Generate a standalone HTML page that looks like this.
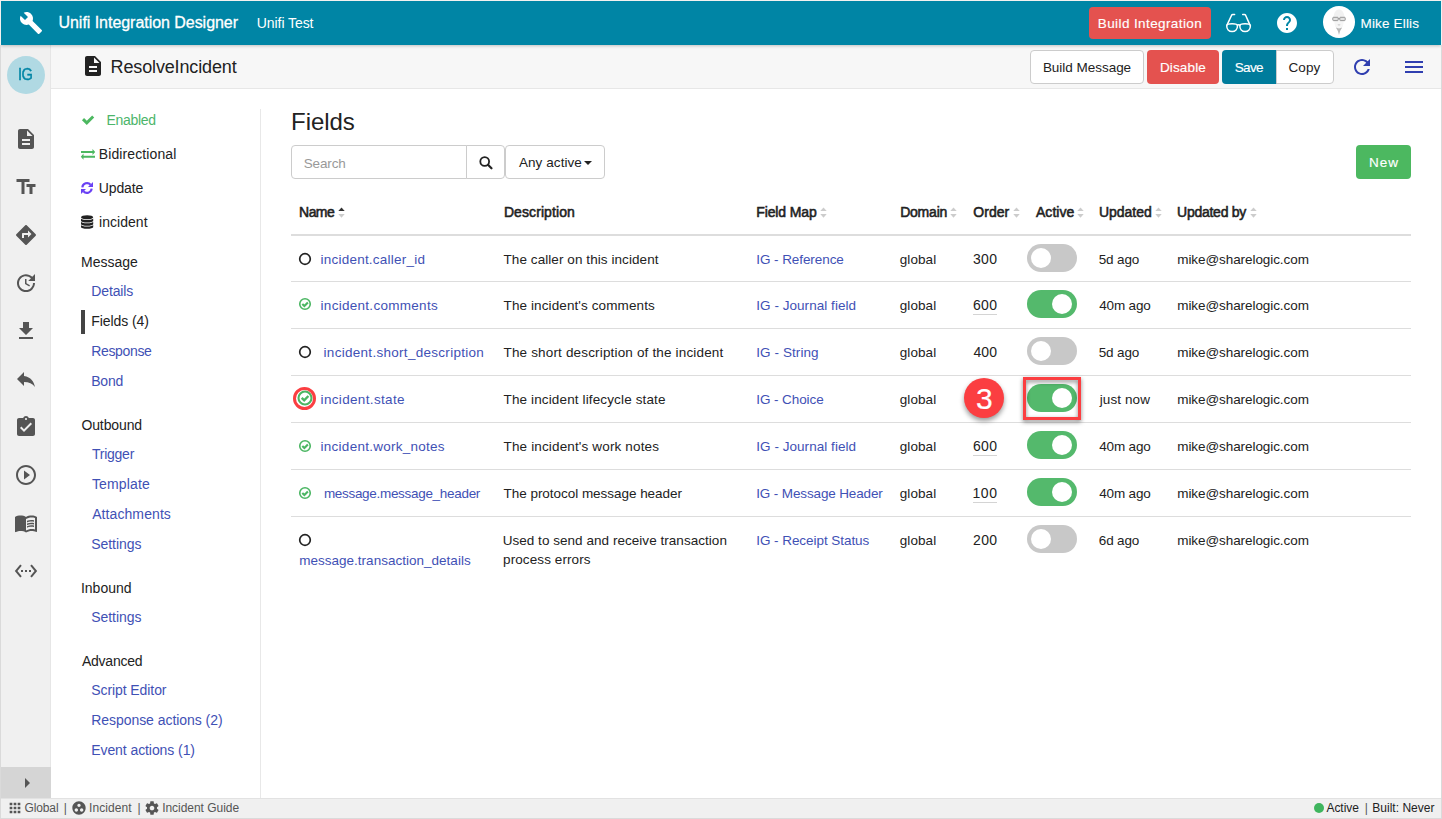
<!DOCTYPE html>
<html lang="en"><head><meta charset="utf-8"><title>Unifi Integration Designer</title>
<style>
html,body{margin:0;padding:0}
body{width:1442px;height:819px;overflow:hidden;background:#fff;position:relative;font-family:'Liberation Sans',sans-serif}
.b,.i,.t{position:absolute;box-sizing:border-box}
.t{position:absolute;white-space:nowrap;line-height:20px;font-family:'Liberation Sans',sans-serif}
header,aside,nav,main,footer,section{position:absolute;left:0;top:0;width:0;height:0}
.btn{border-radius:4px}
</style></head>
<body>
<aside><div class="b" style="left:1px;top:45px;width:50px;height:753px;background:#f0f0f0;border-right:1px solid #e6e6e6"></div><div class="b" style="left:7px;top:56px;width:38px;height:38px;background:#b0d9e3;border-radius:50%"></div><span id="ig" class="t" style="left:18.23px;top:65px;font-size:17px;font-weight:400;color:#0085a5;letter-spacing:-0.523px;-webkit-text-stroke:.45px #0085a5;transform:scaleX(.86);transform-origin:0 50%">IG</span><svg class="i" style="left:14px;top:127px" width="24" height="24" viewBox="0 0 24 24" fill="#555" ><path d="M14 2H6c-1.1 0-1.99.9-1.99 2L4 20c0 1.1.89 2 1.99 2H18c1.1 0 2-.9 2-2V8l-6-6zm2 16H8v-2h8v2zm0-4H8v-2h8v2zm-3-5V3.5L18.5 9H13z"/></svg><svg class="i" style="left:14px;top:175px" width="24" height="24" viewBox="0 0 24 24" fill="#555" ><path d="M2.5 4v3h5v12h3V7h5V4h-13zm19 5h-9v3h3v7h3v-7h3V9z"/></svg><svg class="i" style="left:14px;top:223px" width="24" height="24" viewBox="0 0 24 24" fill="#555" ><path d="M21.71 11.29l-9-9c-.39-.39-1.02-.39-1.41 0l-9 9c-.39.39-.39 1.02 0 1.41l9 9c.39.39 1.02.39 1.41 0l9-9c.39-.38.39-1.01 0-1.41zM14 14.5V12h-4v3H8v-4c0-.55.45-1 1-1h5V7.5l3.5 3.5-3.5 3.5z"/></svg><svg class="i" style="left:14px;top:271px" width="24" height="24" viewBox="0 0 24 24" fill="#555" ><path d="M21 10.12h-6.78l2.74-2.82c-2.73-2.7-7.15-2.8-9.88-.1-2.73 2.71-2.73 7.08 0 9.79 2.73 2.71 7.15 2.71 9.88 0C18.32 15.65 19 14.08 19 12.1h2c0 1.98-.88 4.55-2.64 6.29-3.51 3.48-9.21 3.48-12.72 0-3.5-3.47-3.53-9.11-.02-12.58 3.51-3.47 9.14-3.47 12.65 0L21 3v7.12zM12.5 8v4.25l3.5 2.08-.72 1.21L11 13V8h1.5z"/></svg><svg class="i" style="left:14px;top:319px" width="24" height="24" viewBox="0 0 24 24" fill="#555" ><path d="M19 9h-4V3H9v6H5l7 7 7-7zM5 18v2h14v-2H5z"/></svg><svg class="i" style="left:14px;top:367px" width="24" height="24" viewBox="0 0 24 24" fill="#555" ><path d="M10 9V5l-7 7 7 7v-4.1c5 0 8.5 1.6 11 5.1-1-5-4-10-11-11z"/></svg><svg class="i" style="left:14px;top:415px" width="24" height="24" viewBox="0 0 24 24" fill="#555" ><path d="M19 3h-4.18C14.4 1.84 13.3 1 12 1c-1.3 0-2.4.84-2.82 2H5c-1.1 0-2 .9-2 2v14c0 1.1.9 2 2 2h14c1.1 0 2-.9 2-2V5c0-1.1-.9-2-2-2zm-7 0c.55 0 1 .45 1 1s-.45 1-1 1-1-.45-1-1 .45-1 1-1zm-2 14l-4-4 1.41-1.41L10 14.17l6.59-6.59L18 9l-8 8z"/></svg><svg class="i" style="left:14px;top:463px" width="24" height="24" viewBox="0 0 24 24" fill="#555" ><path d="M10 16.5l6-4.5-6-4.5v9zM12 2C6.48 2 2 6.48 2 12s4.48 10 10 10 10-4.48 10-10S17.52 2 12 2zm0 18c-4.41 0-8-3.59-8-8s3.59-8 8-8 8 3.59 8 8-3.59 8-8 8z"/></svg><svg class="i" style="left:14px;top:511px" width="24" height="24" viewBox="0 0 24 24" fill="#555" ><path d="M21 5c-1.11-.35-2.33-.5-3.5-.5-1.950 0-4.050.4-5.5 1.500-1.450-1.100-3.550-1.500-5.500-1.500S2.450 4.900 1 6v14.650c0 .250.250.500.500.500.100 0 .150-.050.250-.050C3.100 20.450 5.050 20 6.500 20c1.950 0 4.050.400 5.500 1.500 1.350-.850 3.800-1.500 5.500-1.500 1.650 0 3.350.300 4.750 1.050.100.050.150.050.250.050.250 0 .500-.250.500-.500V6c-.600-.450-1.250-.750-2-1zm0 13.500c-1.100-.350-2.300-.500-3.500-.500-1.700 0-4.150.650-5.500 1.500V8c1.350-.850 3.800-1.500 5.500-1.500 1.200 0 2.400.150 3.500.500v11.500z M17.500 10.500c.880 0 1.730.090 2.500.260V9.240c-.790-.150-1.640-.240-2.500-.240-1.700 0-3.240.290-4.500.830v1.660c1.130-.640 2.700-.990 4.500-.990z M13 12.490v1.660c1.130-.640 2.700-.990 4.500-.990.880 0 1.730.090 2.500.260V11.900c-.790-.150-1.640-.240-2.500-.240-1.700 0-3.240.300-4.500.830z M17.500 14.330c-1.700 0-3.240.290-4.500.830v1.660c1.130-.640 2.700-.990 4.500-.990.880 0 1.730.090 2.500.260v-1.520c-.790-.160-1.640-.240-2.500-.240z"/></svg><svg class="i" style="left:14px;top:559px" width="24" height="24" viewBox="0 0 24 24" fill="#555" ><path d="M7.77 6.76L6.23 5.48.82 12l5.41 6.52 1.54-1.28L3.42 12l4.35-5.240zM7 13h2v-2H7v2zm10-2h-2v2h2v-2zm-6 2h2v-2h-2v2zm6.770-7.520l-1.540 1.280L20.580 12l-4.350 5.240 1.540 1.280L23.180 12l-5.410-6.520z"/></svg><div class="b" style="left:1px;top:767px;width:50px;height:31px;background:#d5d5d5"></div><svg class="i" style="left:15px;top:770.7px" width="24" height="24" viewBox="0 0 24 24" fill="#555" ><path d="M10 17l5-5-5-5v10z"/></svg></aside>
<section><div class="b" style="left:51px;top:45px;width:1390px;height:44px;background:#f7f7f7;border-bottom:1px solid #e7e7e7"></div><svg class="i" style="left:81px;top:54px" width="24" height="24" viewBox="0 0 24 24" fill="#222" ><path d="M14 2H6c-1.1 0-1.99.9-1.99 2L4 20c0 1.1.89 2 1.99 2H18c1.1 0 2-.9 2-2V8l-6-6zm2 16H8v-2h8v2zm0-4H8v-2h8v2zm-3-5V3.5L18.5 9H13z"/></svg><span id="s1" class="t" style="left:110.55px;top:57px;font-size:18px;font-weight:400;color:#222;letter-spacing:-0.137px;">ResolveIncident</span><div class="b btn" style="left:1030px;top:50px;width:114px;height:34px;background:#fff;border:1px solid #ccc"></div><div class="b btn" style="left:1147px;top:50px;width:72px;height:34px;background:#e4524f"></div><div class="b" style="left:1222px;top:50px;width:55px;height:34px;background:#007c9c;border-radius:4px 0 0 4px"></div><div class="b" style="left:1276px;top:50px;width:58px;height:34px;background:#fff;border:1px solid #ccc;border-radius:0 4px 4px 0"></div><span id="s2" class="t" style="left:1042.90px;top:58px;font-size:13.5px;font-weight:400;color:#222;letter-spacing:-0.027px;">Build Message</span><span id="s3" class="t" style="left:1159.94px;top:58px;font-size:13.5px;font-weight:400;color:#fff;letter-spacing:0.143px;-webkit-text-stroke:.15px #fff">Disable</span><span id="s4" class="t" style="left:1234.70px;top:58px;font-size:13.5px;font-weight:400;color:#fff;letter-spacing:-0.652px;-webkit-text-stroke:.15px #fff">Save</span><span id="s5" class="t" style="left:1288.39px;top:58px;font-size:13.5px;font-weight:400;color:#222;letter-spacing:0.151px;">Copy</span><svg class="i" style="left:1349.6px;top:55px" width="24" height="24" viewBox="0 0 24 24" fill="#303fb0" ><path d="M17.65 6.35C16.2 4.9 14.21 4 12 4c-4.42 0-7.99 3.58-7.99 8s3.57 8 7.99 8c3.73 0 6.84-2.55 7.73-6h-2.08c-.82 2.33-3.04 4-5.65 4-3.31 0-6-2.69-6-6s2.69-6 6-6c1.66 0 3.14.69 4.22 1.78L13 11h7V4l-2.35 2.35z"/></svg><svg class="i" style="left:1402px;top:55px" width="24" height="24" viewBox="0 0 24 24" fill="#303fb0" ><path d="M3 18h18v-2H3v2zm0-5h18v-2H3v2zm0-7v2h18V6H3z"/></svg></section>
<nav><div class="b" style="left:260px;top:109px;width:1px;height:689px;background:#e8e8e8"></div><svg class="i" style="left:80px;top:112px" width="16" height="14" viewBox="0 0 16 14"><path d="M3 7.100L6.800 10.900 13.200 4.500" fill="none" stroke="#4cb860" stroke-width="2.900"/></svg><svg class="i" style="left:80px;top:147px" width="16" height="14" viewBox="0 0 16 14" fill="#4cb860"><path d="M1 4h11.500V1.900L15.200 5l-2.700 3.100V6H1z"/><path d="M15 8.700H3.500V6.600L.8 9.700l2.700 3.100v-2.100H15z"/></svg><svg class="i" style="left:80px;top:181px" width="14" height="14" viewBox="0 0 14 14"><g fill="none" stroke="#6a42f4" stroke-width="2.100"><path d="M2.300 6.300A4.800 4.800 0 0 1 10.600 3.700"/><path d="M11.700 7.700A4.800 4.800 0 0 1 3.400 10.300"/></g><path d="M13 1v5H8z" fill="#6a42f4"/><path d="M1 13V8h5z" fill="#6a42f4"/></svg><svg class="i" style="left:80px;top:214px" width="14" height="16" viewBox="0 0 14 16" fill="#222"><ellipse cx="7.100" cy="3.200" rx="6.100" ry="2.050"/><path d="M1 4.45C1 5.35 3.7 5.95 7.1 5.95C10.5 5.95 13.2 5.35 13.2 4.45V6.95C13.2 7.85 10.5 8.45 7.1 8.45C3.7 8.45 1 7.85 1 6.95z"/><path d="M1 7.75C1 8.65 3.7 9.25 7.1 9.25C10.5 9.25 13.2 8.65 13.2 7.75V10.25C13.2 11.15 10.5 11.75 7.1 11.75C3.7 11.75 1 11.15 1 10.25z"/><path d="M1 11.05C1 11.95 3.7 12.55 7.1 12.55C10.5 12.55 13.2 11.95 13.2 11.05V13.25C13.2 14.15 10.5 14.75 7.1 14.75C3.7 14.75 1 14.15 1 13.25z"/></svg><div class="b" style="left:81px;top:310px;width:4px;height:24px;background:#444"></div><span id="n1" class="t" style="left:106.52px;top:110px;font-size:14px;font-weight:400;color:#4cb56a;letter-spacing:-0.314px;">Enabled</span><span id="n2" class="t" style="left:98.81px;top:144px;font-size:14px;font-weight:400;color:#222;letter-spacing:0.102px;">Bidirectional</span><span id="n3" class="t" style="left:98.86px;top:178px;font-size:14px;font-weight:400;color:#222;letter-spacing:-0.150px;">Update</span><span id="n4" class="t" style="left:99.07px;top:212px;font-size:14px;font-weight:400;color:#222;letter-spacing:0.032px;">incident</span><span id="n5" class="t" style="left:81.02px;top:252px;font-size:14px;font-weight:400;color:#222;letter-spacing:-0.008px;">Message</span><span id="n6" class="t" style="left:91.21px;top:281px;font-size:14px;font-weight:400;color:#3f51b5;letter-spacing:-0.107px;">Details</span><span id="n7" class="t" style="left:91.21px;top:311px;font-size:14px;font-weight:400;color:#222;letter-spacing:-0.066px;">Fields (4)</span><span id="n8" class="t" style="left:91.21px;top:341px;font-size:14px;font-weight:400;color:#3f51b5;letter-spacing:-0.342px;">Response</span><span id="n9" class="t" style="left:91.21px;top:371px;font-size:14px;font-weight:400;color:#3f51b5;letter-spacing:-0.195px;">Bond</span><span id="n10" class="t" style="left:81.41px;top:415px;font-size:14px;font-weight:400;color:#222;letter-spacing:-0.111px;">Outbound</span><span id="n11" class="t" style="left:91.96px;top:444px;font-size:14px;font-weight:400;color:#3f51b5;letter-spacing:-0.242px;">Trigger</span><span id="n12" class="t" style="left:91.96px;top:474px;font-size:14px;font-weight:400;color:#3f51b5;letter-spacing:0.138px;">Template</span><span id="n13" class="t" style="left:92.14px;top:504px;font-size:14px;font-weight:400;color:#3f51b5;letter-spacing:0.093px;">Attachments</span><span id="n14" class="t" style="left:91.20px;top:534px;font-size:14px;font-weight:400;color:#3f51b5;letter-spacing:-0.031px;">Settings</span><span id="n15" class="t" style="left:80.90px;top:578px;font-size:14px;font-weight:400;color:#222;letter-spacing:0.017px;">Inbound</span><span id="n16" class="t" style="left:91.20px;top:607px;font-size:14px;font-weight:400;color:#3f51b5;letter-spacing:-0.031px;">Settings</span><span id="n17" class="t" style="left:81.93px;top:651px;font-size:14px;font-weight:400;color:#222;letter-spacing:-0.237px;">Advanced</span><span id="n18" class="t" style="left:91.20px;top:680px;font-size:14px;font-weight:400;color:#3f51b5;letter-spacing:-0.075px;">Script Editor</span><span id="n19" class="t" style="left:91.21px;top:710px;font-size:14px;font-weight:400;color:#3f51b5;letter-spacing:-0.049px;">Response actions (2)</span><span id="n20" class="t" style="left:91.21px;top:740px;font-size:14px;font-weight:400;color:#3f51b5;letter-spacing:-0.078px;">Event actions (1)</span></nav>
<main><span id="m1" class="t" style="left:291.03px;top:112px;font-size:24px;font-weight:400;color:#222;letter-spacing:-0.034px;">Fields</span><div class="b" style="left:291px;top:145px;width:176px;height:34px;background:#fff;border:1px solid #ccc;border-radius:4px 0 0 4px"></div><div class="b" style="left:466px;top:145px;width:39px;height:34px;background:#fff;border:1px solid #ccc;border-radius:0 4px 4px 0"></div><svg class="i" style="left:477.500px;top:155px" width="16" height="16" viewBox="0 0 16 16" fill="none" stroke="#222"><circle cx="6.700" cy="6.500" r="4.400" stroke-width="1.800"/><path d="M10 9.800l3.500 3.500" stroke-width="2.200" stroke-linecap="round"/></svg><div class="b btn" style="left:505px;top:145px;width:100px;height:34px;background:#fff;border:1px solid #ccc"></div><svg class="i" style="left:583.800px;top:161px" width="8" height="4" viewBox="0 0 8 4"><path d="M0 0h8L4 4z" fill="#222"/></svg><div class="b btn" style="left:1356px;top:145px;width:55px;height:34px;background:#4cb860"></div><span id="m2" class="t" style="left:303.63px;top:154px;font-size:13.5px;font-weight:400;color:#999;letter-spacing:-0.121px;">Search</span><span id="m3" class="t" style="left:518.91px;top:153px;font-size:13.5px;font-weight:400;color:#222;letter-spacing:0.077px;">Any active</span><span id="m4" class="t" style="left:1368.95px;top:153px;font-size:13.5px;font-weight:400;color:#fff;letter-spacing:0.990px;-webkit-text-stroke:.15px #fff">New</span><span id="th0" class="t" style="left:299.12px;top:202px;font-size:14px;font-weight:400;color:#222;letter-spacing:-0.579px;-webkit-text-stroke:.55px #222">Name</span><span id="th1" class="t" style="left:503.90px;top:202px;font-size:14px;font-weight:400;color:#222;letter-spacing:0.092px;-webkit-text-stroke:.55px #222">Description</span><span id="th2" class="t" style="left:756.35px;top:202px;font-size:14px;font-weight:400;color:#222;letter-spacing:-0.141px;-webkit-text-stroke:.55px #222">Field Map</span><span id="th3" class="t" style="left:900.13px;top:202px;font-size:14px;font-weight:400;color:#222;letter-spacing:-0.202px;-webkit-text-stroke:.55px #222">Domain</span><span id="th4" class="t" style="left:973.35px;top:202px;font-size:14px;font-weight:400;color:#222;letter-spacing:0.019px;-webkit-text-stroke:.55px #222">Order</span><span id="th5" class="t" style="left:1035.90px;top:202px;font-size:14px;font-weight:400;color:#222;letter-spacing:0.076px;-webkit-text-stroke:.55px #222">Active</span><span id="th6" class="t" style="left:1099.04px;top:202px;font-size:14px;font-weight:400;color:#222;letter-spacing:-0.038px;-webkit-text-stroke:.55px #222">Updated</span><span id="th7" class="t" style="left:1177.06px;top:202px;font-size:14px;font-weight:400;color:#222;letter-spacing:-0.257px;-webkit-text-stroke:.55px #222">Updated by</span><svg class="i" style="left:338px;top:207px" width="7" height="11" viewBox="0 0 7 11"><path d="M.300 4L3.500.500 6.700 4z" fill="#333"/><path d="M.300 7.100L3.500 10.800 6.700 7.100z" fill="#ccc"/></svg><svg class="i" style="left:819.5px;top:207px" width="7" height="11" viewBox="0 0 7 11"><path d="M.300 4L3.500.500 6.700 4z" fill="#ccc"/><path d="M.300 7.100L3.500 10.800 6.700 7.100z" fill="#ccc"/></svg><svg class="i" style="left:950.3px;top:207px" width="7" height="11" viewBox="0 0 7 11"><path d="M.300 4L3.500.500 6.700 4z" fill="#ccc"/><path d="M.300 7.100L3.500 10.800 6.700 7.100z" fill="#ccc"/></svg><svg class="i" style="left:1012.8px;top:207px" width="7" height="11" viewBox="0 0 7 11"><path d="M.300 4L3.500.500 6.700 4z" fill="#ccc"/><path d="M.300 7.100L3.500 10.800 6.700 7.100z" fill="#ccc"/></svg><svg class="i" style="left:1077px;top:207px" width="7" height="11" viewBox="0 0 7 11"><path d="M.300 4L3.500.500 6.700 4z" fill="#ccc"/><path d="M.300 7.100L3.500 10.800 6.700 7.100z" fill="#ccc"/></svg><svg class="i" style="left:1154.5px;top:207px" width="7" height="11" viewBox="0 0 7 11"><path d="M.300 4L3.500.500 6.700 4z" fill="#ccc"/><path d="M.300 7.100L3.500 10.800 6.700 7.100z" fill="#ccc"/></svg><svg class="i" style="left:1250px;top:207px" width="7" height="11" viewBox="0 0 7 11"><path d="M.300 4L3.500.500 6.700 4z" fill="#ccc"/><path d="M.300 7.100L3.500 10.800 6.700 7.100z" fill="#ccc"/></svg><div class="b" style="left:291px;top:234px;width:1120px;height:2px;background:#ddd"></div><div class="b" style="left:291px;top:281px;width:1120px;height:1px;background:#ddd"></div><div class="b" style="left:291px;top:328px;width:1120px;height:1px;background:#ddd"></div><div class="b" style="left:291px;top:375px;width:1120px;height:1px;background:#ddd"></div><div class="b" style="left:291px;top:422px;width:1120px;height:1px;background:#ddd"></div><div class="b" style="left:291px;top:469px;width:1120px;height:1px;background:#ddd"></div><div class="b" style="left:291px;top:516px;width:1120px;height:1px;background:#ddd"></div><svg class="i" style="left:298px;top:251.5px" width="15" height="15" viewBox="0 0 15 15" fill="none" stroke="#222"><circle cx="7" cy="7" r="5.300" stroke-width="1.700"/></svg><div class="b" style="left:1027px;top:244px;width:50px;height:28px;background:#c8c8c8;border-radius:14px"><div class="b" style="left:4px;top:4px;width:20px;height:20px;background:#fff;border-radius:50%"></div></div><span id="r0n" class="t" style="left:320.56px;top:250px;font-size:13.5px;font-weight:400;color:#3f51b5;letter-spacing:0.224px;">incident.caller_id</span><span id="r0d" class="t" style="left:503.54px;top:250px;font-size:13.5px;font-weight:400;color:#222;letter-spacing:0.071px;">The caller on this incident</span><span id="r0f" class="t" style="left:756.25px;top:250px;font-size:13.5px;font-weight:400;color:#3f51b5;letter-spacing:-0.074px;">IG - Reference</span><span id="r0g" class="t" style="left:899.74px;top:250px;font-size:13.5px;font-weight:400;color:#222;letter-spacing:0.077px;">global</span><span id="r0u" class="t" style="left:1098.76px;top:250px;font-size:13.5px;font-weight:400;color:#222;letter-spacing:-0.134px;">5d ago</span><span id="r0m" class="t" style="left:1177.21px;top:250px;font-size:13.5px;font-weight:400;color:#222;letter-spacing:-0.072px;">mike@sharelogic.com</span><span id="r0o" class="t" style="left:973.06px;top:249px;font-size:14px;font-weight:400;color:#222;letter-spacing:0.281px;">300</span><svg class="i" style="left:298px;top:297.3px" width="15" height="15" viewBox="0 0 15 15" fill="none" stroke="#4bb663"><circle cx="7" cy="7" r="5.250" stroke-width="1.600"/><path d="M4.300 6.900l2.100 2.100 3.500-3.600" stroke-width="2.100"/></svg><div class="b" style="left:1027px;top:290px;width:50px;height:28px;background:#54b96c;border-radius:14px"><div class="b" style="left:25px;top:4px;width:20px;height:20px;background:#fff;border-radius:50%"></div></div><span id="r1n" class="t" style="left:320.56px;top:296px;font-size:13.5px;font-weight:400;color:#3f51b5;letter-spacing:0.286px;">incident.comments</span><span id="r1d" class="t" style="left:503.54px;top:296px;font-size:13.5px;font-weight:400;color:#222;letter-spacing:0.106px;">The incident's comments</span><span id="r1f" class="t" style="left:756.25px;top:296px;font-size:13.5px;font-weight:400;color:#3f51b5;letter-spacing:0.044px;">IG - Journal field</span><span id="r1g" class="t" style="left:899.74px;top:296px;font-size:13.5px;font-weight:400;color:#222;letter-spacing:0.077px;">global</span><span id="r1u" class="t" style="left:1099.24px;top:296px;font-size:13.5px;font-weight:400;color:#222;letter-spacing:-0.164px;">40m ago</span><span id="r1m" class="t" style="left:1177.21px;top:296px;font-size:13.5px;font-weight:400;color:#222;letter-spacing:-0.072px;">mike@sharelogic.com</span><span id="r1o" class="t" style="left:972.90px;top:295px;font-size:14px;font-weight:400;color:#222;letter-spacing:0.364px;">600</span><div class="b" style="left:973px;top:314px;width:24px;height:1px;background:#d4d4d4"></div><svg class="i" style="left:298px;top:345.3px" width="15" height="15" viewBox="0 0 15 15" fill="none" stroke="#222"><circle cx="7" cy="7" r="5.300" stroke-width="1.700"/></svg><div class="b" style="left:1027px;top:337px;width:50px;height:28px;background:#c8c8c8;border-radius:14px"><div class="b" style="left:4px;top:4px;width:20px;height:20px;background:#fff;border-radius:50%"></div></div><span id="r2n" class="t" style="left:323.56px;top:343px;font-size:13.5px;font-weight:400;color:#3f51b5;letter-spacing:0.289px;">incident.short_description</span><span id="r2d" class="t" style="left:503.54px;top:343px;font-size:13.5px;font-weight:400;color:#222;letter-spacing:0.163px;">The short description of the incident</span><span id="r2f" class="t" style="left:756.25px;top:343px;font-size:13.5px;font-weight:400;color:#3f51b5;letter-spacing:0.083px;">IG - String</span><span id="r2g" class="t" style="left:899.74px;top:343px;font-size:13.5px;font-weight:400;color:#222;letter-spacing:0.077px;">global</span><span id="r2u" class="t" style="left:1098.76px;top:343px;font-size:13.5px;font-weight:400;color:#222;letter-spacing:-0.134px;">5d ago</span><span id="r2m" class="t" style="left:1177.21px;top:343px;font-size:13.5px;font-weight:400;color:#222;letter-spacing:-0.072px;">mike@sharelogic.com</span><span id="r2o" class="t" style="left:973.52px;top:342px;font-size:14px;font-weight:400;color:#222;letter-spacing:0.051px;">400</span><svg class="i" style="left:295.800px;top:389.2px" width="18" height="18" viewBox="0 0 18 18" fill="none" stroke="#4bb663"><circle cx="9" cy="9" r="6.500" stroke-width="2.100"/><path d="M5.700 8.800l2.500 2.500 4.200-4.300" stroke-width="2.400"/></svg><div class="b" style="left:1027px;top:384px;width:50px;height:28px;background:#54b96c;border-radius:14px"><div class="b" style="left:25px;top:4px;width:20px;height:20px;background:#fff;border-radius:50%"></div></div><span id="r3n" class="t" style="left:320.56px;top:390px;font-size:13.5px;font-weight:400;color:#3f51b5;letter-spacing:0.342px;">incident.state</span><span id="r3d" class="t" style="left:503.54px;top:390px;font-size:13.5px;font-weight:400;color:#222;letter-spacing:0.133px;">The incident lifecycle state</span><span id="r3f" class="t" style="left:756.25px;top:390px;font-size:13.5px;font-weight:400;color:#3f51b5;letter-spacing:-0.088px;">IG - Choice</span><span id="r3g" class="t" style="left:899.74px;top:390px;font-size:13.5px;font-weight:400;color:#222;letter-spacing:0.077px;">global</span><span id="r3u" class="t" style="left:1099.77px;top:390px;font-size:13.5px;font-weight:400;color:#222;letter-spacing:0.095px;">just now</span><span id="r3m" class="t" style="left:1177.21px;top:390px;font-size:13.5px;font-weight:400;color:#222;letter-spacing:-0.072px;">mike@sharelogic.com</span><svg class="i" style="left:298px;top:438.6px" width="15" height="15" viewBox="0 0 15 15" fill="none" stroke="#4bb663"><circle cx="7" cy="7" r="5.250" stroke-width="1.600"/><path d="M4.300 6.900l2.100 2.100 3.500-3.600" stroke-width="2.100"/></svg><div class="b" style="left:1027px;top:431px;width:50px;height:28px;background:#54b96c;border-radius:14px"><div class="b" style="left:25px;top:4px;width:20px;height:20px;background:#fff;border-radius:50%"></div></div><span id="r4n" class="t" style="left:320.56px;top:437px;font-size:13.5px;font-weight:400;color:#3f51b5;letter-spacing:0.263px;">incident.work_notes</span><span id="r4d" class="t" style="left:503.54px;top:437px;font-size:13.5px;font-weight:400;color:#222;letter-spacing:0.148px;">The incident's work notes</span><span id="r4f" class="t" style="left:756.25px;top:437px;font-size:13.5px;font-weight:400;color:#3f51b5;letter-spacing:0.044px;">IG - Journal field</span><span id="r4g" class="t" style="left:899.74px;top:437px;font-size:13.5px;font-weight:400;color:#222;letter-spacing:0.077px;">global</span><span id="r4u" class="t" style="left:1099.24px;top:437px;font-size:13.5px;font-weight:400;color:#222;letter-spacing:-0.164px;">40m ago</span><span id="r4m" class="t" style="left:1177.21px;top:437px;font-size:13.5px;font-weight:400;color:#222;letter-spacing:-0.072px;">mike@sharelogic.com</span><span id="r4o" class="t" style="left:972.90px;top:436px;font-size:14px;font-weight:400;color:#222;letter-spacing:0.364px;">600</span><div class="b" style="left:973px;top:455px;width:24px;height:1px;background:#d4d4d4"></div><svg class="i" style="left:298px;top:486.4px" width="15" height="15" viewBox="0 0 15 15" fill="none" stroke="#4bb663"><circle cx="7" cy="7" r="5.250" stroke-width="1.600"/><path d="M4.300 6.900l2.100 2.100 3.500-3.600" stroke-width="2.100"/></svg><div class="b" style="left:1027px;top:478px;width:50px;height:28px;background:#54b96c;border-radius:14px"><div class="b" style="left:25px;top:4px;width:20px;height:20px;background:#fff;border-radius:50%"></div></div><span id="r5n" class="t" style="left:323.88px;top:484px;font-size:13.5px;font-weight:400;color:#3f51b5;letter-spacing:-0.304px;">message.message_header</span><span id="r5d" class="t" style="left:503.54px;top:484px;font-size:13.5px;font-weight:400;color:#222;letter-spacing:-0.034px;">The protocol message header</span><span id="r5f" class="t" style="left:756.25px;top:484px;font-size:13.5px;font-weight:400;color:#3f51b5;letter-spacing:-0.137px;">IG - Message Header</span><span id="r5g" class="t" style="left:899.74px;top:484px;font-size:13.5px;font-weight:400;color:#222;letter-spacing:0.077px;">global</span><span id="r5u" class="t" style="left:1099.24px;top:484px;font-size:13.5px;font-weight:400;color:#222;letter-spacing:-0.164px;">40m ago</span><span id="r5m" class="t" style="left:1177.21px;top:484px;font-size:13.5px;font-weight:400;color:#222;letter-spacing:-0.072px;">mike@sharelogic.com</span><span id="r5o" class="t" style="left:972.49px;top:483px;font-size:14px;font-weight:400;color:#222;letter-spacing:0.569px;">100</span><div class="b" style="left:973px;top:502px;width:24px;height:1px;background:#d4d4d4"></div><svg class="i" style="left:298px;top:533.3px" width="15" height="15" viewBox="0 0 15 15" fill="none" stroke="#222"><circle cx="7" cy="7" r="5.300" stroke-width="1.700"/></svg><div class="b" style="left:1027px;top:525px;width:50px;height:28px;background:#c8c8c8;border-radius:14px"><div class="b" style="left:4px;top:4px;width:20px;height:20px;background:#fff;border-radius:50%"></div></div><span id="r6n" class="t" style="left:299.21px;top:551px;font-size:13.5px;font-weight:400;color:#3f51b5;letter-spacing:0.014px;">message.transaction_details</span><span id="r6d" class="t" style="left:502.65px;top:531px;font-size:13.5px;font-weight:400;color:#222;letter-spacing:0.040px;">Used to send and receive transaction</span><span id="r6f" class="t" style="left:756.25px;top:531px;font-size:13.5px;font-weight:400;color:#3f51b5;letter-spacing:-0.056px;">IG - Receipt Status</span><span id="r6g" class="t" style="left:899.74px;top:531px;font-size:13.5px;font-weight:400;color:#222;letter-spacing:0.077px;">global</span><span id="r6u" class="t" style="left:1098.82px;top:531px;font-size:13.5px;font-weight:400;color:#222;letter-spacing:-0.163px;">6d ago</span><span id="r6m" class="t" style="left:1177.21px;top:531px;font-size:13.5px;font-weight:400;color:#222;letter-spacing:-0.072px;">mike@sharelogic.com</span><span id="r6o" class="t" style="left:973.12px;top:530px;font-size:14px;font-weight:400;color:#222;letter-spacing:0.255px;">200</span><span id="r6d2" class="t" style="left:503.05px;top:550px;font-size:13.5px;font-weight:400;color:#222;letter-spacing:0.094px;">process errors</span></main>
<section><div class="b" style="left:293px;top:387px;width:23px;height:23px;border:3.200px solid #fb3e41;border-radius:50%"></div><div class="b" style="left:1023px;top:377px;width:58px;height:43px;border:3px solid #fb3e41;filter:drop-shadow(0 2px 2px rgba(0,0,0,.5))"></div><div class="b" style="left:964px;top:378px;width:40px;height:40px;background:#fb3e41;border-radius:50%;box-shadow:0 3px 5px rgba(0,0,0,.4)"></div><span id="b3" class="t" style="left:976.05px;top:389px;font-size:30px;font-weight:400;color:#fff;letter-spacing:0.000px;-webkit-text-stroke:.2px #fff">3</span></section>
<footer><div class="b" style="left:1px;top:798px;width:1440px;height:20px;background:#f0f0f0;border-top:1px solid #e2e2e2"></div><svg class="i" style="left:7px;top:799.8px" width="16" height="16" viewBox="0 0 24 24" fill="#555" ><path d="M4 8h4V4H4v4zm6 12h4v-4h-4v4zm-6 0h4v-4H4v4zm0-6h4v-4H4v4zm6 0h4v-4h-4v4zm6-10v4h4V4h-4zm-6 4h4V4h-4v4zm6 6h4v-4h-4v4zm0 6h4v-4h-4v4z"/></svg><svg class="i" style="left:71.1px;top:800px" width="16" height="16" viewBox="0 0 24 24" fill="#555" ><path d="M12 2C6.48 2 2 6.48 2 12s4.48 10 10 10 10-4.480 10-10S17.520 2 12 2zM8 17.500c-1.380 0-2.500-1.120-2.500-2.500s1.120-2.500 2.500-2.500 2.500 1.120 2.500 2.500-1.120 2.500-2.500 2.500zM9.500 8c0-1.380 1.120-2.500 2.500-2.500s2.500 1.120 2.500 2.500-1.120 2.500-2.500 2.500S9.500 9.380 9.500 8zm6.500 9.500c-1.380 0-2.500-1.120-2.500-2.500s1.120-2.500 2.500-2.500 2.500 1.120 2.500 2.500-1.120 2.500-2.500 2.500z"/></svg><svg class="i" style="left:144.4px;top:800px" width="16" height="16" viewBox="0 0 24 24" fill="#555" ><path d="M19.43 12.98c.04-.32.07-.64.07-.98s-.03-.66-.07-.98l2.110-1.650c.190-.150.240-.420.120-.640l-2-3.460c-.120-.220-.390-.300-.610-.220l-2.490 1c-.520-.400-1.080-.730-1.690-.980l-.380-2.650C14.460 2.180 14.250 2 14 2h-4c-.250 0-.460.180-.490.420l-.380 2.650c-.610.250-1.170.590-1.690.980l-2.490-1c-.230-.090-.490 0-.610.220l-2 3.460c-.130.220-.070.490.120.640l2.110 1.650c-.040.320-.070.650-.070.980s.030.660.070.980l-2.110 1.650c-.190.150-.240.420-.120.640l2 3.460c.120.220.390.300.610.220l2.490-1c.520.400 1.080.730 1.690.980l.380 2.650c.030.240.240.420.490.420h4c.250 0 .460-.180.490-.420l.380-2.650c.610-.250 1.170-.590 1.690-.980l2.490 1c.230.090.490 0 .610-.220l2-3.460c.120-.220.070-.490-.120-.640l-2.110-1.650zM12 15.500c-1.930 0-3.500-1.570-3.500-3.500s1.570-3.500 3.500-3.500 3.500 1.570 3.500 3.500-1.570 3.500-3.500 3.500z"/></svg><div class="b" style="left:1313.7px;top:803px;width:10px;height:10px;background:#3fb55e;border-radius:50%"></div><span id="f1" class="t" style="left:24.57px;top:798px;font-size:12px;font-weight:400;color:#555;letter-spacing:-0.136px;">Global</span><span id="f2" class="t" style="left:63.85px;top:798px;font-size:12px;font-weight:400;color:#555;letter-spacing:0.000px;">|</span><span id="f3" class="t" style="left:89.02px;top:798px;font-size:12px;font-weight:400;color:#555;letter-spacing:0.067px;">Incident</span><span id="f4" class="t" style="left:137.44px;top:798px;font-size:12px;font-weight:400;color:#555;letter-spacing:0.000px;">|</span><span id="f5" class="t" style="left:162.19px;top:798px;font-size:12px;font-weight:400;color:#555;letter-spacing:-0.037px;">Incident Guide</span><span id="f6" class="t" style="left:1326.48px;top:798px;font-size:12px;font-weight:400;color:#222;letter-spacing:-0.060px;">Active</span><span id="f7" class="t" style="left:1364.80px;top:798px;font-size:12px;font-weight:400;color:#555;letter-spacing:0.000px;">|</span><span id="f8" class="t" style="left:1372.36px;top:798px;font-size:12px;font-weight:400;color:#222;letter-spacing:0.001px;">Built: Never</span></footer>
<header style="z-index:5"><div class="b" style="left:1px;top:1px;width:1440px;height:44px;background:#0085a5;box-shadow:0 1px 3px rgba(0,0,0,.22)"></div><svg class="i" style="left:19px;top:11px" width="24" height="24" viewBox="0 0 24 24" fill="#fff" ><path d="M22.7 19l-9.1-9.1c.9-2.3.4-5-1.5-6.9-2-2-5-2.4-7.4-1.3L9 6 6 9 1.6 4.7C.4 7.1.9 10.1 2.9 12.1c1.9 1.9 4.6 2.4 6.9 1.5l9.1 9.1c.4.4 1 .4 1.4 0l2.3-2.3c.5-.4.5-1.1.1-1.4z"/></svg><span id="h1" class="t" style="left:58.50px;top:13px;font-size:16px;font-weight:400;color:#fff;letter-spacing:-0.040px;-webkit-text-stroke:.3px #fff">Unifi Integration Designer</span><span id="h2" class="t" style="left:256.72px;top:13px;font-size:14px;font-weight:400;color:#fff;letter-spacing:-0.060px;">Unifi Test</span><div class="b btn" style="left:1089px;top:7px;width:122px;height:32px;background:#e4524f;"></div><span id="h3" class="t" style="left:1097.80px;top:14px;font-size:13.5px;font-weight:400;color:#fff;letter-spacing:0.397px;-webkit-text-stroke:.15px #fff">Build Integration</span><svg class="i" style="left:1224px;top:12px" width="30" height="22" viewBox="0 0 30 22" fill="none" stroke="#fff" stroke-width="1.500" stroke-linecap="round" stroke-linejoin="round"><path d="M3.200 12.600L7.600 3.200Q8 2.400 8.900 2.400H10.600"/><path d="M25.800 12.600L21.600 3.200Q21.200 2.400 20.300 2.400H18.700"/><path d="M2.700 13.800C2.700 12 4 11.700 8.100 11.700S13.500 12 13.500 13.800C13.500 17 11.300 19.600 8.100 19.600S2.700 17 2.700 13.800z"/><path d="M15.800 13.800C15.800 12 17.100 11.700 21.100 11.700S26.400 12 26.400 13.800C26.400 17 24.200 19.600 21.100 19.600S15.800 17 15.800 13.800z"/><path d="M13.500 13.200Q14.650 12.300 15.800 13.200"/></svg><svg class="i" style="left:1274.6px;top:11px" width="24" height="24" viewBox="0 0 24 24" fill="#fff" ><path d="M12 2C6.48 2 2 6.48 2 12s4.48 10 10 10 10-4.48 10-10S17.52 2 12 2zm1 17h-2v-2h2v2zm2.07-7.75l-.9.92C13.45 12.9 13 13.5 13 15h-2v-.5c0-1.100.45-2.100 1.170-2.830l1.240-1.260c.370-.360.590-.860.590-1.410 0-1.100-.900-2-2-2s-2 .900-2 2H8c0-2.210 1.790-4 4-4s4 1.790 4 4c0 .880-.360 1.680-.930 2.250z"/></svg><svg class="i" style="left:1322px;top:5px" width="34" height="34" viewBox="0 0 34 34"><circle cx="17" cy="17" r="16" fill="#fff"/><path d="M11.500 13c0-6 3-8.500 5.500-8.500s5.500 2.500 5.500 8.500z" fill="#f1f1f1"/><path d="M12 15.500h10l-1.200 6-3.800 3.500-3.800-3.500z" fill="#f6f6f6"/><rect x="10.800" y="12.300" width="5.400" height="3.300" rx=".7" fill="#e2e2e2" stroke="#8f8f8f" stroke-width=".9"/><rect x="17.800" y="12.300" width="5.400" height="3.300" rx=".7" fill="#e2e2e2" stroke="#8f8f8f" stroke-width=".9"/><path d="M16.200 13.600h1.600" stroke="#8f8f8f" stroke-width=".8"/><path d="M15.600 19.300h2.800l-.5 1.300h-1.800z" fill="#cfcfcf"/><path d="M13.800 22.600c2 1.100 4.400 1.100 6.400 0l-2.100 3.400-1.100 4-1.100-4z" fill="#b9b9b9"/></svg><span id="h4" class="t" style="left:1360.59px;top:14px;font-size:13.5px;font-weight:400;color:#fff;letter-spacing:0.149px;-webkit-text-stroke:.1px #fff">Mike Ellis</span></header>
<div class="b" style="left:0px;top:0px;width:1442px;height:819px;border:1px solid #dadada;border-top-color:#f3f1f0;pointer-events:none;z-index:6"></div>
<div class="b" style="left:0px;top:0px;width:1px;height:45px;background:#f3f1f0;z-index:7"></div><div class="b" style="left:1441px;top:0px;width:1px;height:45px;background:#f3f1f0;z-index:7"></div>
</body></html>
